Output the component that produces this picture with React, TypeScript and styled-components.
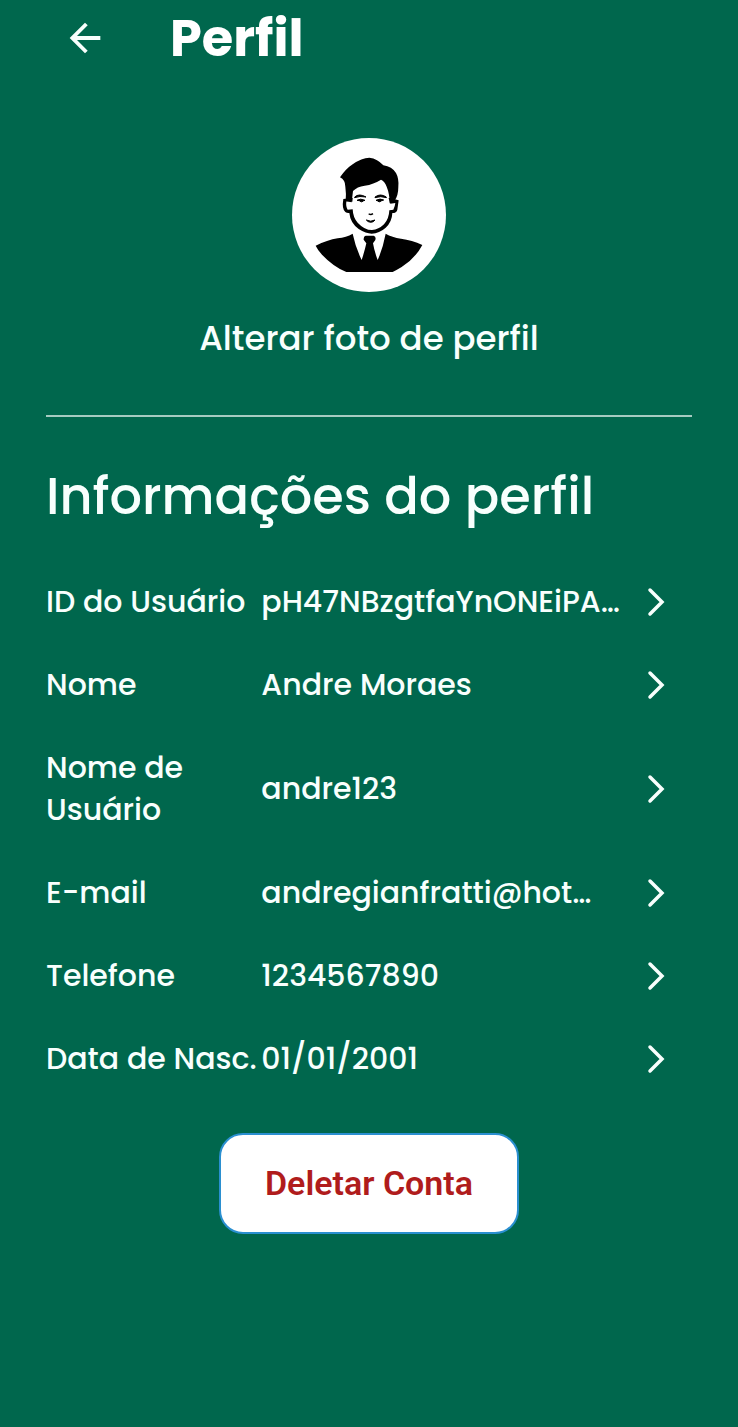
import React from "react";
import styled, { createGlobalStyle } from "styled-components";

const GlobalStyle = createGlobalStyle`
  *, *::before, *::after { box-sizing: border-box; }
  body {
    margin: 0;
    background: #00674d;
    color: #f8fffd;
    font-family: Poppins, Inter, sans-serif;
  }
`;

const Page = styled.div`
  min-height: 100vh;
  background: #00674d;
`;

const Header = styled.header`
  display: flex;
  align-items: center;
  gap: 62px;
  height: 76px;
  padding: 0 62px;
`;

const BackButton = styled.button`
  display: flex;
  padding: 0;
  border: 0;
  background: none;
  color: inherit;
  cursor: pointer;
`;

const Title = styled.h1`
  margin: 0;
  font-size: 51px;
  line-height: 76px;
  font-weight: 700;
  color: #ffffff;
`;

const Content = styled.main`
  padding: 62px 46px 48px;
`;

const PhotoSection = styled.section`
  display: flex;
  flex-direction: column;
  align-items: center;
  gap: 20px;
  padding-bottom: 51px;
  border-bottom: 2px solid #a6cbc1;
`;

const PhotoButton = styled.button`
  padding: 0 8px;
  border: 0;
  background: none;
  color: inherit;
  font-family: inherit;
  font-size: 34px;
  line-height: 52px;
  font-weight: 500;
  cursor: pointer;
`;

const SectionTitle = styled.h2`
  margin: 39px 0 45px;
  font-size: 51px;
  line-height: 80px;
  font-weight: 500;
`;

const InfoList = styled.ul`
  display: flex;
  flex-direction: column;
  gap: 41px;
  margin: 0;
  padding: 0;
  list-style: none;
`;

const InfoRow = styled.li`
  display: grid;
  grid-template-columns: 3fr 5fr 1fr;
  align-items: center;
  font-size: 30px;
  line-height: 42px;
  font-weight: 500;
`;

const Label = styled.span<{ $wrap?: boolean }>`
  min-width: 0;
  white-space: ${({ $wrap }) => ($wrap ? "normal" : "nowrap")};
`;

const Value = styled.span`
  min-width: 0;
  white-space: nowrap;
`;

const RowButton = styled.button`
  display: flex;
  justify-content: center;
  padding: 0;
  border: 0;
  background: none;
  color: inherit;
  cursor: pointer;
`;

const Actions = styled.div`
  display: flex;
  justify-content: center;
  margin-top: 53px;
`;

const DeleteButton = styled.button`
  padding: 28px 44px;
  border: 2px solid #2a8fd0;
  border-radius: 24px;
  background: #ffffff;
  color: #b01c1c;
  font-family: Roboto, sans-serif;
  font-size: 34px;
  line-height: 41px;
  font-weight: 600;
  cursor: pointer;
`;

const Avatar = () => (
  <svg width="154" height="154" viewBox="21 25 462 462" role="img" aria-label="Foto de perfil">
    <circle cx="252" cy="256" r="231" fill="#fff" />
    <path d="M175 208 Q170 238 181 247 Q186 251 193 250 Q196 280 221 298 Q243 312 260 312 Q283 311 302 294 Q321 277 322 250 Q335 250 337 240 L341 212 L316 205 L200 205 Z" fill="#000" />
    <path d="M202 216 Q196 213 184 215 Q182 232 188 240 L203 239 Q204 264 218 279 Q238 301 261 301 Q281 300 297 284 Q312 268 313 242 L325 240 Q330 230 331 220 L316 222 Q308 202 307 181 Q301 162 286 151 Q264 169 235 169 Q214 171 205 185 Z" fill="#fff" />
    <path d="M165 143 Q183 117 203 104 Q230 84 253 84 Q278 87 295 107 Q321 111 333 130 Q342 146 340 171 Q340 199 328 214 L314 221 Q314 193 305 171 Q299 155 288 150 Q266 164 239 168 Q216 171 204 184 L200 218 L182 215 Q184 191 181 171 Q181 151 165 143 Z" fill="#000" />
    <path d="M209 202 Q222 190 243 202 Q224 198 209 204 Z M270 202 Q286 190 304 202 L304 204 Q287 198 270 204 Z" fill="#000" stroke="#000" strokeWidth="3" />
    <path d="M216 212 Q226 205 240 212 L236 213 Q230 220 223 213 Z M273 212 Q286 205 296 211 L290 213 Q282 220 277 213 Z" fill="#000" stroke="#000" strokeWidth="3" />
    <path d="M251 252 Q257 257 264 252" fill="none" stroke="#000" strokeWidth="4" />
    <path d="M244 271 Q257 278 270 271 Q265 278 257 278 Q248 277 244 271 Z" fill="#000" stroke="#000" strokeWidth="3" />
    <path d="M92 348 Q127 331 158 326 Q184 323 203 312 Q212 355 230 391 Q239 364 244 341 L236 330 Q235 320 242 318 L266 318 Q274 321 271 331 L264 341 Q268 365 278 391 Q293 358 302 312 Q321 323 348 327 Q381 331 412 346 Q391 386 350 412 Q335 421 323 427 L184 427 Q145 411 111 375 Q98 361 92 348 Z" fill="#000" />
  </svg>
);

const fields = [
  { label: "ID do Usuário", value: "pH47NBzgtfaYnONEiPA…" },
  { label: "Nome", value: "Andre Moraes" },
  { label: "Nome de Usuário", value: "andre123", wrap: true },
  { label: "E-mail", value: "andregianfratti@hot…" },
  { label: "Telefone", value: "1234567890" },
  { label: "Data de Nasc.", value: "01/01/2001" },
];

export default function App() {
  return (
    <Page>
      <GlobalStyle />
      <Header>
        <BackButton type="button" aria-label="Voltar">
          <svg width="46" height="46" viewBox="0 0 24 24" fill="currentColor" aria-hidden="true">
            <path d="M20 11H7.83l5.59-5.59L12 4l-8 8 8 8 1.41-1.41L7.83 13H20v-2z" />
          </svg>
        </BackButton>
        <Title>Perfil</Title>
      </Header>
      <Content>
        <PhotoSection>
          <Avatar />
          <PhotoButton type="button">Alterar foto de perfil</PhotoButton>
        </PhotoSection>
        <SectionTitle>Informações do perfil</SectionTitle>
        <InfoList>
          {fields.map(({ label, value, wrap }) => (
            <InfoRow key={label}>
              <Label $wrap={wrap}>{label}</Label>
              <Value>{value}</Value>
              <RowButton type="button" aria-label={`Editar ${label}`}>
                <svg width="20" height="30" viewBox="0 0 20 30" fill="none" stroke="currentColor" strokeWidth="3.5" strokeLinecap="round" aria-hidden="true">
                  <path d="M4 3L16 15L4 27" />
                </svg>
              </RowButton>
            </InfoRow>
          ))}
        </InfoList>
        <Actions>
          <DeleteButton type="button">Deletar Conta</DeleteButton>
        </Actions>
      </Content>
    </Page>
  );
}
